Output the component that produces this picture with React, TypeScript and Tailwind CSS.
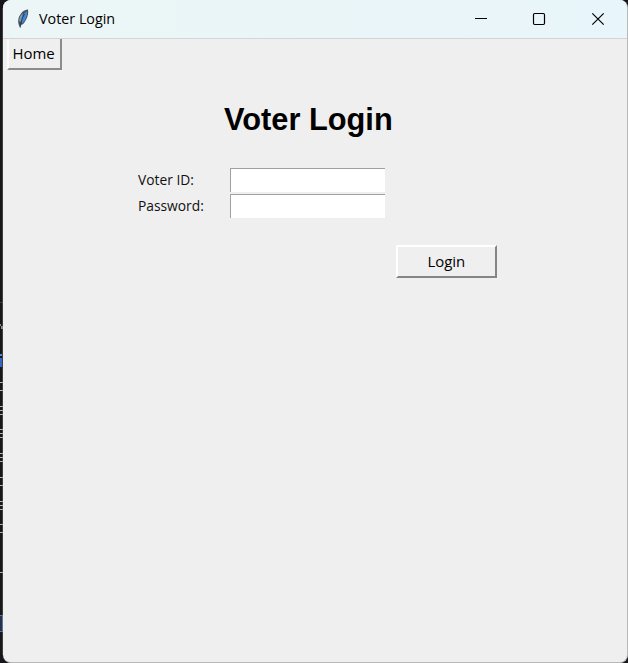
import React from "react";

const ticks = [382, 390, 406, 410, 414, 429, 433, 437, 453, 457, 461, 477, 485, 501, 505, 509, 524, 532, 572];

// Sliver of the editor that shows to the left of the window
function EditorEdge() {
  return (
    <svg className="h-full w-[3px] shrink-0" viewBox="0 0 3 663" shapeRendering="crispEdges">
      <rect width="3" height="663" fill="#171719" />
      <rect y="302" width="3" height="1" fill="#3c3c3f" />
      <rect y="324" width="1" height="2" fill="#b98445" />
      <rect x="1" y="326" width="2" height="3" fill="#8595a0" />
      <rect y="354" width="2" height="2" fill="#4a8ae0" />
      <rect y="358" width="2" height="9" fill="#3567c4" />
      {ticks.map((y) => (
        <rect key={y} y={y} width="3" height="1" fill="#b6b6b8" />
      ))}
      <path d="M0 615.5H2.5V631.5H0" fill="#25324a" stroke="#5478b5" />
      <rect x="2" y="8" width="1" height="647" fill="#6f6f70" opacity=".45" />
    </svg>
  );
}

function Feather() {
  return (
    <svg className="h-[20px] w-[14px]" viewBox="0 0 14 20">
      <path d="M4 18.5C1.2 13.5 1.7 8.5 5.2 4.2C7.2 1.8 9.6 .6 12 .6C12.8 5.2 11.2 10.8 7 15.2L4.5 16Z" fill="#46535e" />
      <path d="M5.2 14C4.9 9 6.8 4.6 10.9 2.2C11.6 6.8 9.6 11 6.5 14.2Z" fill="#4186d6" />
      <path d="M3.2 12.2C3 9 4.3 6.3 7 4L4.8 12.8Z" fill="#8299a8" />
      <path d="M8.4 5C6.1 9 4.9 13 4.3 18.6" fill="none" stroke="#1b2a3a" strokeWidth=".8" />
    </svg>
  );
}

function Field({ label, labelClass }: { label: string; labelClass: string }) {
  return (
    <label className="flex h-[26px] w-[247px] items-start justify-between">
      <span className={`mt-[2px] origin-left whitespace-nowrap text-[14px] leading-[20px] text-[#101010] ${labelClass}`}>{label}</span>
      <input
        type="text"
        className="h-[24px] w-[155px] rounded-none border-t border-l border-t-[#a0a0a0] border-l-[#a0a0a0] bg-white p-0 outline-none"
      />
    </label>
  );
}

export default function App() {
  return (
    <div className="flex h-[663px] w-[628px] overflow-hidden bg-[#171719] font-['Open_Sans','Noto_Sans',sans-serif] text-black">
      <EditorEdge />
      <main className="flex h-[663px] w-[625px] flex-col overflow-hidden rounded-[8px] border-r border-b border-[#b8b8b8] bg-[#efefef]">
        <header className="flex h-[39px] shrink-0 items-center border-b border-[#d2d5d6] bg-linear-to-r from-[#ecf6f6] to-[#e8f5fa]">
          <div className="ml-[13px] flex h-full items-center">
            <Feather />
          </div>
          <span className="mt-[-3px] ml-[9px] w-[77px] origin-left scale-x-[.955] text-[15px] leading-[20px] whitespace-nowrap">Voter Login</span>
          <svg className="mt-[-1px] ml-auto h-[38px] w-[175px]" viewBox="0 0 175 38" fill="none" stroke="#000">
            <path d="M23 18.5H35" shapeRendering="crispEdges" />
            <rect x="81.5" y="13.5" width="11" height="11" rx="1.2" strokeWidth="1.2" />
            <path d="M140.3 13.3L151.7 24.7M151.7 13.3L140.3 24.7" strokeWidth="1.2" />
          </svg>
        </header>
        <button className="ml-[4px] flex h-[31px] w-[55px] shrink-0 items-center justify-center border-2 border-t-0 border-t-white border-r-[#8b8b8b] border-b-[#8b8b8b] border-l-[#fafafa] bg-[#efefef] p-0 pr-[2px]">
          <span className="scale-x-[1.03] text-[14.5px] leading-[20px] whitespace-nowrap">Home</span>
        </button>
        <h1 className="mt-[32px] ml-[221px] h-[36px] origin-left scale-x-[.993] font-['Liberation_Sans',Arial,sans-serif] text-[31px] leading-[36px] font-bold whitespace-nowrap">Voter Login</h1>
        <form className="mt-[30px] ml-[135px] flex flex-col">
          <Field label="Voter ID:" labelClass="scale-x-[.985]" />
          <Field label="Password:" labelClass="scale-x-[.985]" />
          <button type="button" className="mt-[25px] ml-[258px] flex h-[33px] w-[101px] items-center justify-center border-2 border-t-white border-r-[#858585] border-b-[#858585] border-l-white bg-[#efefef] p-0">
            <span className="scale-x-[1.03] text-[14.5px] leading-[20px] whitespace-nowrap">Login</span>
          </button>
        </form>
      </main>
    </div>
  );
}
